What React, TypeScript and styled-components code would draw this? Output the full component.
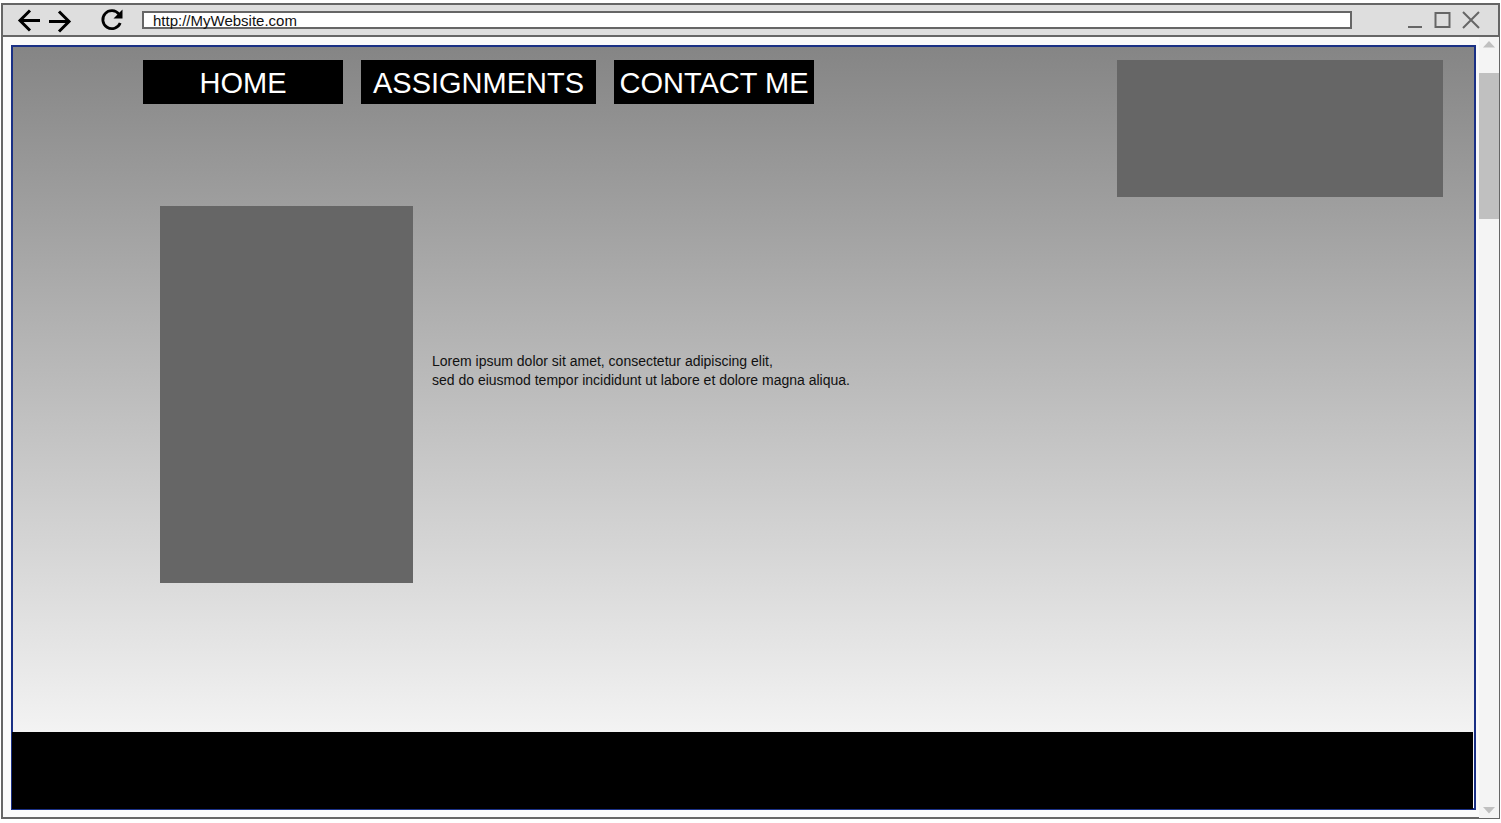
import React from "react";
import styled, { createGlobalStyle } from "styled-components";

const GlobalStyle = createGlobalStyle`
  *, *::before, *::after { box-sizing: border-box; }
  body {
    margin: 0;
    background: #fff;
    color: #111;
    font-family: "Liberation Sans", Arial, sans-serif;
  }
`;

const Screen = styled.div`
  display: flex;
  min-height: 100vh;
  padding: 3px 1px 4px 1px;
`;

const BrowserWindow = styled.div`
  flex: 1;
  display: flex;
  flex-direction: column;
  border: 2px solid #666;
  background: #fafafa;
`;

const Toolbar = styled.header`
  display: flex;
  align-items: center;
  height: 32px;
  padding: 0 17px 0 12px;
  border-bottom: 2px solid #666;
  background: #dedede;
`;

const ButtonGroup = styled.div<{ $gap: number }>`
  display: flex;
  gap: ${(p) => p.$gap}px;
`;

const IconButton = styled.button<{ $size: number }>`
  display: block;
  width: ${(p) => p.$size}px;
  height: ${(p) => p.$size}px;
  padding: 0;
  border: 0;
  background: none;
  cursor: pointer;

  svg { display: block; }
`;

const ReloadButton = styled(IconButton)`
  margin-left: 22px;
`;

const AddressBar = styled.input`
  flex: 1;
  min-width: 0;
  height: 18px;
  margin: 0 53px 0 17px;
  padding: 1px 11px 0;
  border: 0;
  border-radius: 0;
  outline: none;
  background: #fff;
  box-shadow: inset 0 0 0 2px #666;
  color: #111;
  font-family: inherit;
  font-size: 15px;
  line-height: 17px;
`;

const Viewport = styled.div`
  flex: 1;
  display: flex;
`;

const Page = styled.div`
  flex: 1;
  display: flex;
  flex-direction: column;
  margin: 8px 3px 7px 8px;
  border: 2px solid #1a3085;
  background: linear-gradient(#858585, #fff);
`;

const PageHeader = styled.div`
  display: flex;
  justify-content: space-between;
  align-items: flex-start;
  padding: 13px 31px 0 130px;
`;

const Nav = styled.nav`
  display: flex;
  gap: 18px;
`;

const NavLink = styled.a<{ $width: number }>`
  width: ${(p) => p.$width}px;
  padding-top: 2px;
  background: #000;
  color: #fff;
  font-size: 29px;
  line-height: 42px;
  text-align: center;
  text-decoration: none;
  white-space: nowrap;
`;

const Placeholder = styled.div<{ $width: number; $height: number }>`
  flex: none;
  width: ${(p) => p.$width}px;
  height: ${(p) => p.$height}px;
  background: #666;
`;

const Main = styled.main`
  flex: 1;
  display: flex;
  align-items: flex-start;
  gap: 19px;
  padding: 9px 31px 149px 147px;
`;

const Copy = styled.p`
  margin: 146px 0 0;
  font-size: 14px;
  line-height: 19px;
`;

const Footer = styled.footer`
  height: 77px;
  margin: 0 1px -1px -1px;
  background: #000;
`;

const ScrollTrack = styled.div`
  display: flex;
  flex-direction: column;
  align-items: center;
  width: 20px;
  margin: 0 -1px -1px 0;
  background: #f4f4f4;
`;

const ScrollThumb = styled.div`
  width: 100%;
  height: 146px;
  margin: 20px 0 auto;
  background: #c0c0c0;
`;

const ScrollButton = styled.button`
  display: block;
  width: 20px;
  height: 16px;
  padding: 0;
  border: 0;
  background: none;

  svg { display: block; }
`;

const links = [
  { label: "HOME", width: 200 },
  { label: "ASSIGNMENTS", width: 235 },
  { label: "CONTACT ME", width: 200 },
];

export default function App() {
  return (
    <>
      <GlobalStyle />
      <Screen>
        <BrowserWindow>
          <Toolbar>
            <ButtonGroup $gap={2}>
              <IconButton $size={30} aria-label="Back">
                <svg width="30" height="30" fill="none" stroke="#000" strokeWidth="3">
                  <path d="M25 15.5H5M15 5.5l-10 10 10 10" />
                </svg>
              </IconButton>
              <IconButton $size={30} aria-label="Forward">
                <svg width="30" height="30" fill="none" stroke="#000" strokeWidth="3">
                  <path d="M2 16.5h20M12 6.5l10 10-10 10" />
                </svg>
              </IconButton>
            </ButtonGroup>
            <ReloadButton $size={26} aria-label="Reload">
              <svg width="26" height="26" fill="none">
                <path d="M20 7.2A9 9 0 1 0 21.2 16" stroke="#000" strokeWidth="2.8" />
                <path d="M23.5 2.5v9h-9z" fill="#000" />
              </svg>
            </ReloadButton>
            <AddressBar aria-label="Address" defaultValue="http://MyWebsite.com" />
            <ButtonGroup $gap={8}>
              <IconButton $size={20} aria-label="Minimize">
                <svg width="20" height="20" stroke="#666" strokeWidth="2">
                  <path d="M3 17h14" />
                </svg>
              </IconButton>
              <IconButton $size={20} aria-label="Maximize">
                <svg width="20" height="20" fill="none" stroke="#666" strokeWidth="2">
                  <path d="M2.5 3h14v14h-14z" />
                </svg>
              </IconButton>
              <IconButton $size={20} aria-label="Close">
                <svg width="20" height="20" stroke="#666" strokeWidth="2">
                  <path d="M2 2l16 16M18 2L2 18" />
                </svg>
              </IconButton>
            </ButtonGroup>
          </Toolbar>
          <Viewport>
            <Page>
              <PageHeader>
                <Nav>
                  {links.map((l) => (
                    <NavLink key={l.label} href="#" $width={l.width}>
                      {l.label}
                    </NavLink>
                  ))}
                </Nav>
                <Placeholder $width={326} $height={137} />
              </PageHeader>
              <Main>
                <Placeholder $width={253} $height={377} />
                <Copy>
                  Lorem ipsum dolor sit amet, consectetur adipiscing elit,
                  <br />
                  sed do eiusmod tempor incididunt ut labore et dolore magna aliqua.
                </Copy>
              </Main>
              <Footer />
            </Page>
            <ScrollTrack>
              <ScrollButton aria-label="Scroll up">
                <svg width="20" height="16" fill="#c0c0c0">
                  <path d="M4 10.5L10 4l6 6.5z" />
                </svg>
              </ScrollButton>
              <ScrollThumb />
              <ScrollButton aria-label="Scroll down">
                <svg width="20" height="16" fill="#c0c0c0">
                  <path d="M4 5l6 6.5L16 5z" />
                </svg>
              </ScrollButton>
            </ScrollTrack>
          </Viewport>
        </BrowserWindow>
      </Screen>
    </>
  );
}
